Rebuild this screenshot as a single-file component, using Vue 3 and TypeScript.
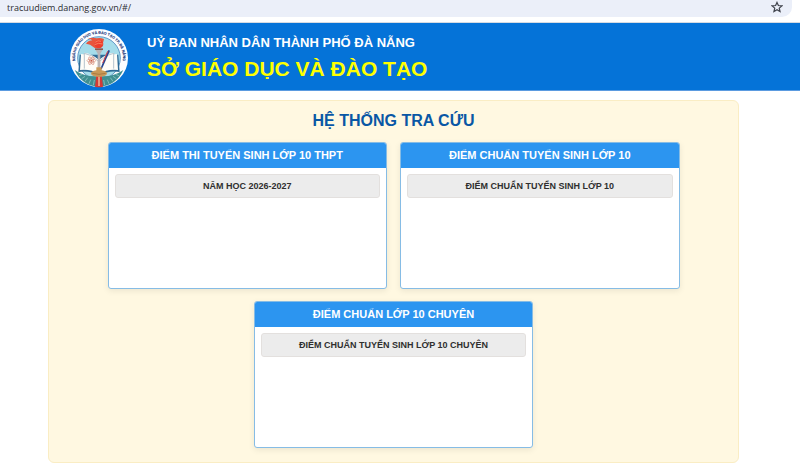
<script setup lang="ts">
interface LookupGroup {
  id: string
  title: string
  action: string
}

const address = 'tracuudiem.danang.gov.vn/#/'

const groups: LookupGroup[] = [
  { id: 'exam', title: 'ĐIỂM THI TUYỂN SINH LỚP 10 THPT', action: 'NĂM HỌC 2026-2027' },
  { id: 'cutoff', title: 'ĐIỂM CHUẨN TUYỂN SINH LỚP 10', action: 'ĐIỂM CHUẨN TUYỂN SINH LỚP 10' },
  { id: 'gifted', title: 'ĐIỂM CHUẨN LỚP 10 CHUYÊN', action: 'ĐIỂM CHUẨN TUYỂN SINH LỚP 10 CHUYÊN' },
]
</script>

<template>
  <div class="page">
    <div class="browser">
      <div class="address-bar">
        <input class="address" type="text" aria-label="Address" :value="address" readonly />
        <button class="star" type="button" aria-label="Bookmark">
          <svg viewBox="0 0 24 24" width="12" height="12">
            <path d="M12 2.8l2.8 6.3 6.9.6-5.2 4.5 1.6 6.8L12 17.4 5.9 21l1.6-6.8-5.2-4.5 6.9-.6z" fill="none" stroke="#3f424b" stroke-width="2.4" />
          </svg>
        </button>
      </div>
    </div>

    <header class="banner">
      <svg class="logo" viewBox="0 0 180 180" role="img" aria-label="Logo">
        <defs>
          <path id="ring-text" d="M23.500 117.300A72 72 0 1 1 156.500 117.300" />
        </defs>
        <circle cx="90" cy="90" r="87" fill="#fdfdff" />
        <circle cx="90" cy="90" r="64" fill="#a5dcea" stroke="#2c6fb0" stroke-width="2" />
        <!-- wreath -->
        <path d="M17 126Q45 146 82 145L84 176Q38 171 17 126z" fill="#3f8f92" />
        <path d="M163 126Q135 146 98 145L96 176Q142 171 163 126z" fill="#3f8f92" />
        <path d="M30 143l10-4M38 152l10-7M48 160l8-11M60 167l5-12M73 172l3-16M150 143l-10-4M142 152l-10-7M132 160l-8-11M120 167l-5-12M107 172l-3-16" stroke="#9fd0cf" stroke-width="2" />
        <path d="M82 142h16l4 34q-12 3-24 0z" fill="#d33a36" />
        <path d="M88 146h4v28h-4z" fill="#f3c6a2" />
        <!-- open book -->
        <path d="M32 80l-4 52q36-5 60 11h4q24-16 60-11l-4-52z" fill="#2d6a96" />
        <path d="M36 78l-3 48q31-4 57 12V96Q68 76 46 74l-1 5z" fill="#fffdf8" />
        <path d="M144 78l3 48q-31-4-57 12V96q22-20 44-22l1 5z" fill="#fffdf8" />
        <path d="M46 76q24 3 42 24v35M134 76q-24 3-42 24v35M46 76v46M134 76v46" fill="none" stroke="#8fa6b7" stroke-width="2" />
        <!-- atom -->
        <g fill="none" stroke="#d68b79" stroke-width="2">
          <ellipse cx="67" cy="98" rx="13" ry="5" />
          <ellipse cx="67" cy="98" rx="13" ry="5" transform="rotate(60 67 98)" />
          <ellipse cx="67" cy="98" rx="13" ry="5" transform="rotate(120 67 98)" />
        </g>
        <circle cx="67" cy="98" r="3" fill="#c65a48" />
        <!-- torch -->
        <path d="M79 65h22l-7 12v42h-8V77z" fill="#b9b3b5" />
        <path d="M78 61h24v5H78z" fill="#8a5a52" />
        <path d="M51 47q8-10 19-10-6-5-14-4 14-7 27-2 11-3 22 2-3 18-15 26-10 5-18-3-7-7-21-9z" fill="#e8553c" />
        <circle cx="90" cy="48" r="13" fill="#ee3d2c" />
        <path d="M79 43q8-8 17-3M77 50q11-7 24-2" fill="none" stroke="#f8a176" stroke-width="2" />
        <!-- pen and ink pot -->
        <path d="M118 66l5 2-24 54-5 4 1-7z" fill="#26458f" />
        <path d="M116 70l-15 35" stroke="#d53f43" stroke-width="3" />
        <path d="M82 118h16v9q16 3 16 9 0 10-24 11-24-1-24-11 0-6 16-9z" fill="#c99958" />
        <path d="M70 136q20 6 40 0" fill="none" stroke="#a9793f" stroke-width="3" />
        <text class="ring-label"><textPath href="#ring-text" startOffset="50%" text-anchor="middle">NGÀNH GIÁO DỤC VÀ ĐÀO TẠO TP. ĐÀ NẴNG</textPath></text>
      </svg>
      <div class="banner-text">
        <p class="authority">UỶ BAN NHÂN DÂN THÀNH PHỐ ĐÀ NẴNG</p>
        <p class="department">SỞ GIÁO DỤC VÀ ĐÀO TẠO</p>
      </div>
    </header>

    <main class="content">
      <section class="panel">
        <h1 class="heading">HỆ THỐNG TRA CỨU</h1>
        <div class="cards">
          <article v-for="group in groups" :key="group.id" class="card">
            <h2 class="card-title">{{ group.title }}</h2>
            <div class="card-body">
              <button class="card-action" type="button">{{ group.action }}</button>
            </div>
          </article>
        </div>
      </section>
    </main>
  </div>
</template>

<style>
body {
  margin: 0;
  background: #fff;
}
</style>

<style scoped>
.page {
  font-family: "Liberation Sans", Arial, sans-serif;
}

.browser {
  padding: 0 8px 5px 0;
  border-bottom: 1px solid #d5dbe3;
}

.address-bar {
  display: flex;
  align-items: center;
  height: 17px;
  padding: 0 9px 0 7px;
  border-radius: 0 0 10px 0;
  background: #ebeff9;
}

.address {
  flex: 1;
  min-width: 0;
  padding: 0 0 1px;
  border: 0;
  outline: 0;
  background: transparent;
  color: #2b2d32;
  font: 9px/14px "Open Sans", "Noto Sans", sans-serif;
}

.star {
  display: flex;
  padding: 0 0 3px;
  border: 0;
  background: transparent;
}

.banner {
  display: flex;
  align-items: center;
  gap: 18px;
  box-sizing: border-box;
  height: 68px;
  padding: 2px 69px 0;
  border-bottom: 1px solid #5b9be0;
  background: #0573d8;
}

.logo {
  flex: none;
  width: 60px;
  height: 60px;
}

.ring-label {
  fill: #27407f;
  stroke: #27407f;
  stroke-width: 0.4;
  font-size: 11px;
  font-weight: 700;
}

.banner-text {
  font-weight: 700;
}

.authority,
.department {
  margin: 0;
}

.authority {
  color: #fff;
  font-size: 13px;
  line-height: 22px;
}

.department {
  color: #ff0;
  font-size: 21px;
  line-height: 30px;
}

.content {
  padding: 9px 61px 4px 48px;
}

.panel {
  padding: 9px 58px 14px;
  border: 1px solid #faedc4;
  border-radius: 6px;
  background: #fff8e1;
}

.heading {
  margin: 0 0 10px;
  color: #0957a5;
  font-size: 16px;
  line-height: 22px;
  text-align: center;
}

.cards {
  display: flex;
  flex-wrap: wrap;
  justify-content: center;
  gap: 12px 13px;
}

.card {
  box-sizing: border-box;
  width: calc(50% - 7px);
  min-height: 147px;
  overflow: hidden;
  border: 1px solid #86bce5;
  border-radius: 3px;
  background: #fff;
  box-shadow: 0 2px 6px rgba(0, 0, 0, 0.08);
}

.card-title {
  margin: 0;
  background: #2c95f0;
  color: #fff;
  font-size: 11px;
  line-height: 25px;
  text-align: center;
}

.card-body {
  padding: 6px;
}

.card-action {
  display: block;
  width: 100%;
  padding: 0;
  border: 1px solid #e3e0de;
  border-radius: 3px;
  background: #ececec;
  color: #2f2f2f;
  font: 700 9px/22px "Liberation Sans", Arial, sans-serif;
}
</style>
